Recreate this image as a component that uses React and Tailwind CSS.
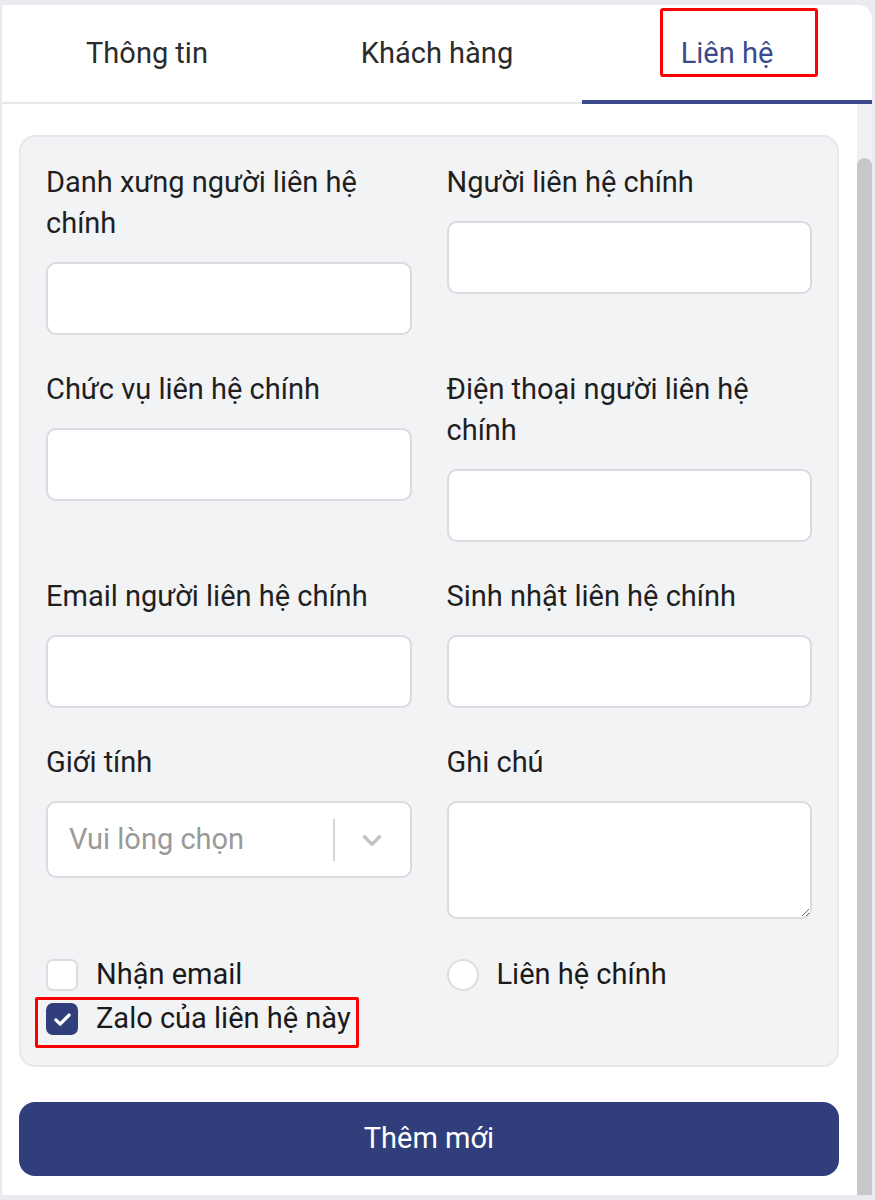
import React from "react";

const labelCls = "block text-[29px] leading-[41px] text-[#1f1f1f]";
const inputCls =
  "mt-[18px] block w-full h-[73px] rounded-[10px] border-2 border-[#d9dbe0] bg-white px-5 text-[29px] outline-none";

function Field({ label, children }) {
  return (
    <div>
      <label className={labelCls}>{label}</label>
      {children || <input type="text" className={inputCls} />}
    </div>
  );
}

function Check({ checked, label, marked }) {
  return (
    <div className="relative self-start flex items-center h-[40px]">
      {marked && (
        <span className="absolute -left-[11px] -right-[8px] -top-[2px] -bottom-[9px] border-[3px] border-[#ff0000] rounded-[2px]" />
      )}
      <span
        className={
          checked
            ? "flex items-center justify-center w-[32px] h-[32px] rounded-[7px] bg-[#303f7b]"
            : "w-[32px] h-[32px] rounded-[7px] border-2 border-[#dcdde2] bg-white"
        }
      >
        {checked && (
          <svg width="21" height="21" viewBox="0 0 24 24" fill="none">
            <path d="M4.5 12.5l4.8 4.8L19.5 7" stroke="#fff" strokeWidth="3.8" strokeLinecap="round" strokeLinejoin="round" />
          </svg>
        )}
      </span>
      <span className="ml-[18px] text-[29px] text-[#1a1a1a]">{label}</span>
    </div>
  );
}

export default function App() {
  const tabs = ["Thông tin", "Khách hàng", "Liên hệ"];
  return (
    <div
      className="w-[875px] h-[1200px] bg-[#ebebef] pt-[5px] pl-[2px] pr-[3px] pb-[5px]"
      style={{ fontFamily: "Roboto, 'Noto Sans', sans-serif" }}
    >
      <div className="flex flex-col h-full bg-white rounded-tr-[14px] overflow-hidden">
        {/* Tabs */}
        <div className="grid grid-cols-3 h-[99px] border-b-2 border-[#e6e7eb] shrink-0">
          {tabs.map((t, i) => (
            <div key={t} className="relative flex items-center justify-center">
              <span className={i === 2 ? "text-[29px] text-[#3a4a8c]" : "text-[29px] text-[#2b2b2b]"}>{t}</span>
              {i === 2 && (
                <>
                  <span className="absolute left-[78px] top-[3px] w-[158px] h-[69px] border-[3px] border-[#ff0000] rounded-[3px]" />
                  <span className="absolute left-0 right-0 -bottom-[2px] h-[4px] bg-[#3a4a8c]" />
                </>
              )}
            </div>
          ))}
        </div>

        <div className="flex flex-1 min-h-0">
          <div className="flex-1 pl-[17px] pr-[18px] pt-[31px]">
            {/* Form card */}
            <div className="rounded-[16px] border-2 border-[#e7e8ec] bg-[#f2f3f5] px-[25px] pt-[25px] pb-[26px]">
              <div className="grid grid-cols-2 gap-x-[35px] gap-y-[34px] items-start">
                <Field label="Danh xưng người liên hệ chính" />
                <Field label="Người liên hệ chính" />
                <Field label="Chức vụ liên hệ chính" />
                <Field label="Điện thoại người liên hệ chính" />
                <Field label="Email người liên hệ chính" />
                <Field label="Sinh nhật liên hệ chính" />
                <Field label="Giới tính">
                  <div className="mt-[18px] flex items-center w-full h-[77px] rounded-[10px] border-2 border-[#d9dbe0] bg-white">
                    <span className="flex-1 pl-[21px] text-[29px] text-[#9a9a9a]">Vui lòng chọn</span>
                    <span className="w-[2px] h-[42px] bg-[#d4d4d4]" />
                    <span className="w-[75px] flex justify-center">
                      <svg width="26" height="26" viewBox="0 0 24 24" fill="none">
                        <path d="M5 9l7 7 7-7" stroke="#c2c2c2" strokeWidth="3" strokeLinecap="round" strokeLinejoin="round" />
                      </svg>
                    </span>
                  </div>
                </Field>
                <Field label="Ghi chú">
                  <textarea className="mt-[18px] block w-full h-[118px] rounded-[10px] border-2 border-[#d9dbe0] bg-white px-5 py-3 text-[29px] outline-none" />
                </Field>
                <div className="mt-[2px] flex flex-col gap-[4px]">
                  <Check label="Nhận email" />
                  <Check checked marked label="Zalo của liên hệ này" />
                </div>
                <div className="mt-[2px] flex items-center h-[40px]">
                  <span className="w-[32px] h-[32px] rounded-full border-2 border-[#dcdde2] bg-white" />
                  <span className="ml-[18px] text-[29px] text-[#1a1a1a]">Liên hệ chính</span>
                </div>
              </div>
            </div>

            <button className="mt-[35px] w-full h-[74px] rounded-[16px] bg-[#303f7b] text-white text-[29px]">
              Thêm mới
            </button>
          </div>

          {/* Scrollbar */}
          <div className="w-[15px] bg-[#f1f1f1] pt-[54px] flex">
            <div className="w-full flex-1 rounded-t-full bg-[#c8c8c8]" />
          </div>
        </div>
      </div>
    </div>
  );
}
